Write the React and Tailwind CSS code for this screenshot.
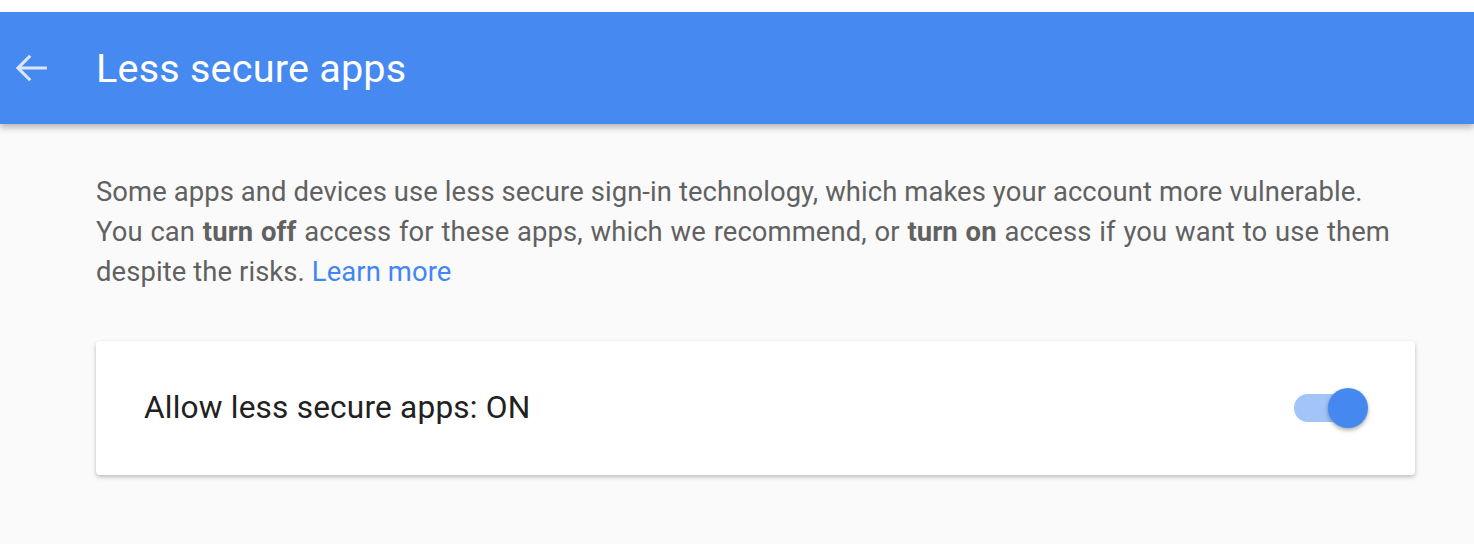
export default function App() {
  return (
    <div className="min-h-[544px] bg-[#fafafa] font-['Roboto',sans-serif]">
      <div className="h-3 bg-white" />
      {/* Header */}
      <header className="h-[112px] bg-[#4689f0] flex items-center shadow-[0_4px_6px_rgba(0,0,0,0.25)] relative">
        <button className="w-[64px] h-[64px] flex items-center justify-center text-white/80">
          <svg width="42" height="42" viewBox="0 0 24 24" fill="none" stroke="currentColor" strokeWidth="1.8" strokeLinecap="butt">
            <path d="M20.5 12H4.5M11 5l-7 7 7 7" />
          </svg>
        </button>
        <h1 className="ml-8 mt-[2px] text-white text-[39.6px] leading-none tracking-[0.2px]">Less secure apps</h1>
      </header>

      <main className="pl-24 pr-[59px] pt-[48px]">
        <p className="text-[27.4px] leading-[40px] text-[#616161] tracking-[0.1px]">
          Some apps and devices use less secure sign-in technology, which makes your account more vulnerable.
          <br />
          <span className="[word-spacing:0.9px]">
            You can <b className="font-bold">turn off</b> access for these apps, which we recommend, or{" "}
            <b className="font-bold">turn on</b> access if you want to use them
          </span>{" "}
          despite the risks. <a className="text-[#4285f4]">Learn more</a>
        </p>

        <div className="mt-[49px] h-[134px] bg-white rounded-[4px] shadow-[0_2px_4px_rgba(0,0,0,0.25)] flex items-center justify-between pl-[48px] pr-[47px]">
          <span className="text-[31.6px] text-[#212121] tracking-[0.2px]">Allow less secure apps: ON</span>
          <div className="relative w-[74px] h-[40px] flex items-center">
            <div className="w-[52px] h-[28px] rounded-full bg-[#a3c4f8]" />
            <div className="absolute right-0 top-0 w-[40px] h-[40px] rounded-full bg-[#4589f0] shadow-[0_2px_4px_rgba(0,0,0,0.35)]" />
          </div>
        </div>
      </main>
    </div>
  );
}
